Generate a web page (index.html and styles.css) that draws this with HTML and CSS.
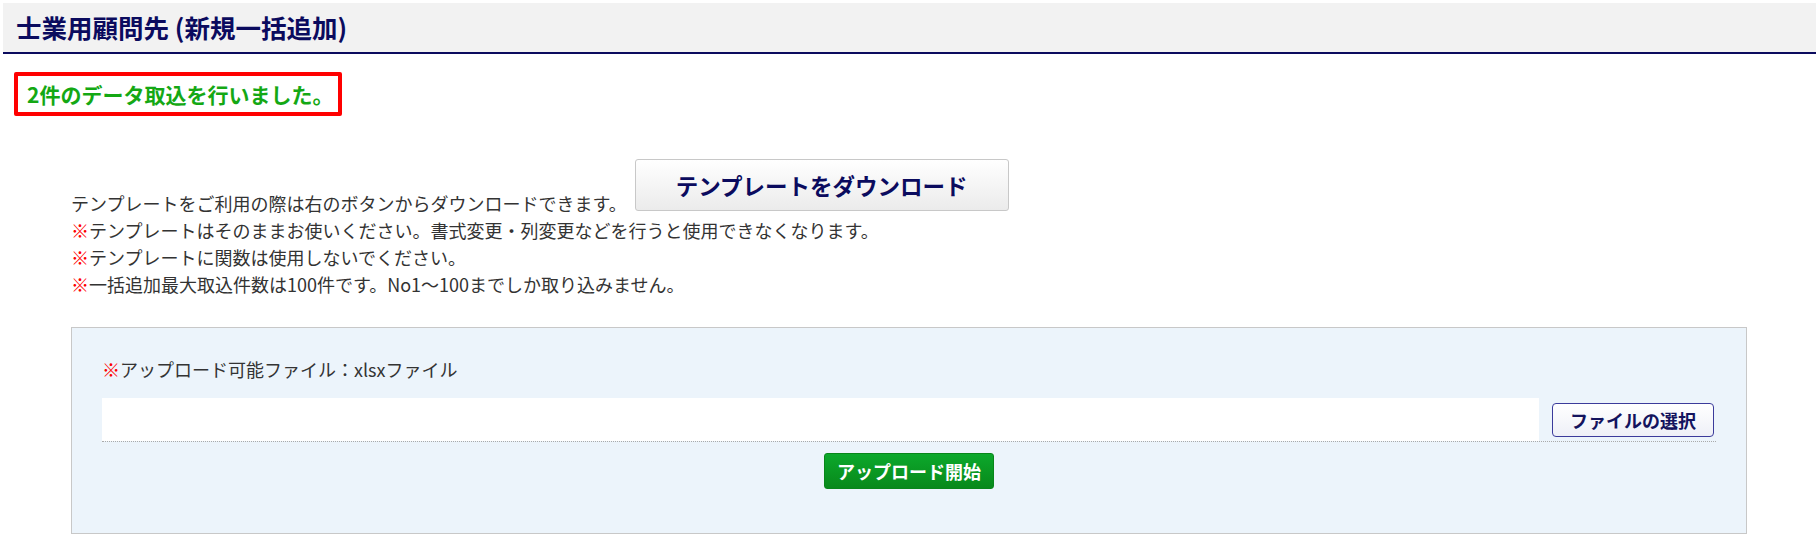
FILE: index.html
```html
<!DOCTYPE html>
<html lang="ja">
<head>
    <meta charset="UTF-8">
    <meta name="viewport" content="width=device-width, initial-scale=1.0">
    <title>士業用顧問先 (新規一括追加)</title>
    <link rel="stylesheet" href="styles.css">
</head>
<body>
    <h1 class="page-title">士業用顧問先 (新規一括追加)</h1>

    <!-- Import result -->
    <p class="result-msg">2件のデータ取込を行いました。</p>

    <div class="content">
        <!-- Template notes -->
        <div class="notes">
            <p>テンプレートをご利用の際は右のボタンからダウンロードできます。<a class="btn-template" href="#">テンプレートをダウンロード</a></p>
            <p><span class="mark">※</span>テンプレートはそのままお使いください。書式変更・列変更などを行うと使用できなくなります。</p>
            <p><span class="mark">※</span>テンプレートに関数は使用しないでください。</p>
            <p><span class="mark">※</span>一括追加最大取込件数は100件です。No1～100までしか取り込みません。</p>
        </div>

        <!-- Upload form -->
        <div class="upload-box">
            <p class="upload-label"><span class="mark">※</span>アップロード可能ファイル：xlsxファイル</p>
            <div class="file-row">
                <div class="file-name"></div>
                <button class="btn-select" type="button">ファイルの選択</button>
            </div>
            <div class="upload-actions">
                <button class="btn-upload" type="button">アップロード開始</button>
            </div>
        </div>
    </div>
</body>
</html>
```

FILE: styles.css
```css
body { margin: 0; font-family: "Noto Sans CJK JP", "Noto Sans", sans-serif; color: #333; font-size: 18px; background: #fff; }
p { margin: 0; }

.page-title { margin: 3px 4px 0 3px; height: 49px; line-height: 48px; padding-left: 13px; background: #f2f2f2; border-bottom: 2px solid #0b0b5e; color: #0b0b5e; font-size: 25.5px; font-weight: bold; }

.result-msg { display: inline-block; margin: 18px 0 0 14px; padding: 3px 5px 3px 9px; line-height: 30px; border: 4px solid #f00; border-radius: 2px; color: #14a814; font-size: 21px; font-weight: bold; }

.content { padding: 0 73px 0 71px; }
.notes { margin-top: 43px; line-height: 27px; }
.mark { color: #f00; }

.btn-template { display: inline-block; overflow: hidden; width: 372px; height: 50px; line-height: 50px; margin-left: 8px; border: 1px solid #c8c8c8; border-radius: 3px; background: linear-gradient(#fff, #ebebeb); color: #0b0b5e; font-size: 22.5px; font-weight: bold; text-align: center; text-decoration: none; }

.upload-box { margin-top: 29px; padding: 28px 30px 44px; border: 1px solid #c8c8c8; background: #ecf4fb; }
.upload-label { line-height: 27px; margin-bottom: 15px; }

.file-row { display: flex; align-items: center; border-bottom: 1px dotted #aaa; }
.file-name { flex: 1; height: 43px; background: #fff; }
.btn-select { width: 162px; height: 34px; margin: 0 2px 0 13px; padding: 0; border: 1px solid #3b3b9b; border-radius: 4px; background: linear-gradient(#fff, #eef0f7); color: #14145e; font-family: inherit; font-size: 18px; font-weight: bold; }

.upload-actions { margin-top: 11px; text-align: center; }
.btn-upload { width: 170px; height: 36px; padding: 0; border: 1px solid #08861a; border-radius: 3px; background: linear-gradient(#0ca82c, #08891b); color: #fff; font-family: inherit; font-size: 18px; font-weight: bold; }
```
